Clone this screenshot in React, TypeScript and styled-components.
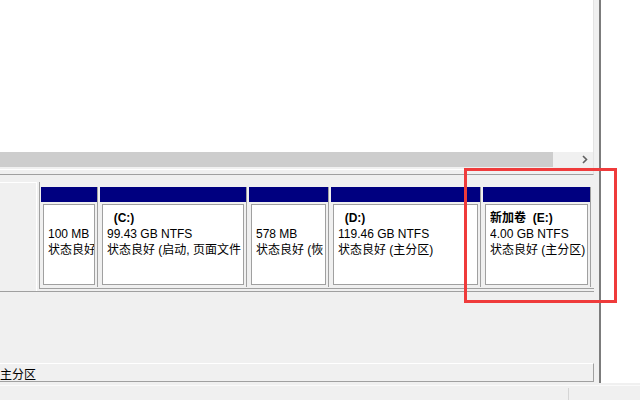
import styled, { createGlobalStyle } from "styled-components";

const GlobalStyle = createGlobalStyle`
  html, body {
    margin: 0;
    padding: 0;
    background: #f0f0f0;
  }
  body {
    font-family: "Liberation Sans", "Noto Sans CJK SC", sans-serif;
    font-size: 12px;
    color: #000;
  }
  * {
    box-sizing: border-box;
  }
`;

const Frame = styled.div`
  position: relative;
  width: 640px;
  height: 400px;
  overflow: hidden;
  display: flex;
  flex-direction: column;
  background: #f0f0f0;
`;

const Main = styled.div`
  height: 385px;
  display: flex;
`;

const Content = styled.div`
  width: 594px;
  display: flex;
  flex-direction: column;
`;

const ListPane = styled.div`
  height: 175px;
  display: flex;
  flex-direction: column;
  border-right: 1px solid #e3e3e3;
  border-bottom: 1px solid #a0a0a0;
`;

const ListBody = styled.div`
  flex: 1;
  background: #fff;
`;

const HScroll = styled.div`
  height: 17px;
  display: flex;
  background: #f0f0f0;
`;

const Thumb = styled.div`
  width: 553px;
  height: 15px;
  background: #cdcdcd;
`;

const ScrollArrow = styled.div`
  margin-left: auto;
  width: 17px;
  height: 17px;
  display: flex;
  align-items: center;
  justify-content: center;
  padding-bottom: 2px;
`;

const ListFooter = styled.div`
  height: 5px;
  border-top: 1px solid #fff;
`;

const LowerPane = styled.div`
  flex: 1;
  display: flex;
  flex-direction: column;
  padding: 7px 0 3px 0;
`;

const DiskRow = styled.div`
  height: 110px;
  display: flex;
  border-bottom: 1px solid #a0a0a0;
`;

const DiskInfo = styled.div`
  width: 37px;
  border-top: 1px solid #fff;
  border-right: 1px solid #fff;
`;

const PartitionArea = styled.div`
  align-self: flex-start;
  flex: 1;
  margin-left: 2px;
  padding: 5px 0 1px 1px;
  display: flex;
  gap: 2px;
  border-left: 1px solid #a0a0a0;
  border-bottom: 1px solid #a0a0a0;
`;

const Partition = styled.div<{ $w: number }>`
  width: ${({ $w }) => $w}px;
  height: 100px;
  display: flex;
  flex-direction: column;
  border-right: 1px solid #a0a0a0;
`;

const Header = styled.div`
  height: 15px;
  background: #000080;
`;

const Body = styled.div`
  flex: 1;
  padding: 2px;
  display: flex;
`;

const Box = styled.div`
  flex: 1;
  min-width: 0;
  background: #fff;
  border: 1px solid #a0a0a0;
  padding: 5px 0 0 4px;
  overflow: hidden;
`;

const Line = styled.div<{ $bold?: boolean }>`
  height: 16px;
  line-height: 16px;
  white-space: pre;
  overflow: hidden;
  font-weight: ${({ $bold }) => ($bold ? "bold" : "normal")};
`;

const Spacer = styled.div`
  flex: 1;
`;

const LegendBar = styled.div`
  height: 19px;
  display: flex;
  align-items: center;
  border-top: 1px solid #fff;
  border-bottom: 1px solid #a0a0a0;
  border-right: 1px solid #a0a0a0;
  width: 594px;
  padding-top: 1px;
  white-space: nowrap;
`;

const Splitter = styled.div`
  width: 5px;
`;

const RightPane = styled.div`
  flex: 1;
  height: 383px;
  background: #fff;
  border-left: 2px solid #7c7c7c;
`;

const StatusBar = styled.div`
  height: 15px;
  display: flex;
  border-top: 1px solid #fafafa;
`;

const StatusCell = styled.div`
  width: 569px;
  margin-top: 2px;
  border-right: 1px solid #d5d5d5;
`;

const Highlight = styled.div`
  position: absolute;
  left: 464px;
  top: 168px;
  width: 153px;
  height: 135px;
  border: 3px solid #ef3b3b;
`;

type PartitionInfo = {
  width: number;
  label: string;
  size: string;
  status: string;
};

// status texts are only what fits in each box
const partitions: PartitionInfo[] = [
  { width: 57, label: " ", size: "100 MB", status: "状态良好" },
  {
    width: 147,
    label: "  (C:)",
    size: "99.43 GB NTFS",
    status: "状态良好 (启动, 页面文件",
  },
  { width: 80, label: " ", size: "578 MB", status: "状态良好 (恢" },
  {
    width: 150,
    label: "  (D:)",
    size: "119.46 GB NTFS",
    status: "状态良好 (主分区)",
  },
  {
    width: 108,
    label: "新加卷  (E:)",
    size: "4.00 GB NTFS",
    status: "状态良好 (主分区)",
  },
];

function Chevron() {
  return (
    <svg width="6" height="9" viewBox="0 0 6 9">
      <path d="M1 1 L4.5 4.5 L1 8" fill="none" stroke="#606060" strokeWidth="1.6" />
    </svg>
  );
}

function App() {
  const partitionElements = partitions.map((p, index) => (
    <Partition key={index} $w={p.width}>
      <Header />
      <Body>
        <Box>
          <Line $bold>{p.label}</Line>
          <Line>{p.size}</Line>
          <Line>{p.status}</Line>
        </Box>
      </Body>
    </Partition>
  ));

  return (
    <>
      <GlobalStyle />
      <Frame>
        <Main>
          <Content>
            <ListPane>
              <ListBody />
              <HScroll>
                <Thumb />
                <ScrollArrow>
                  <Chevron />
                </ScrollArrow>
              </HScroll>
              <ListFooter />
            </ListPane>
            <LowerPane>
              <DiskRow>
                <DiskInfo />
                <PartitionArea>{partitionElements}</PartitionArea>
              </DiskRow>
              <Spacer />
              <LegendBar>主分区</LegendBar>
            </LowerPane>
          </Content>
          <Splitter />
          <RightPane />
        </Main>
        <StatusBar>
          <StatusCell />
        </StatusBar>
        <Highlight />
      </Frame>
    </>
  );
}

export default App;
